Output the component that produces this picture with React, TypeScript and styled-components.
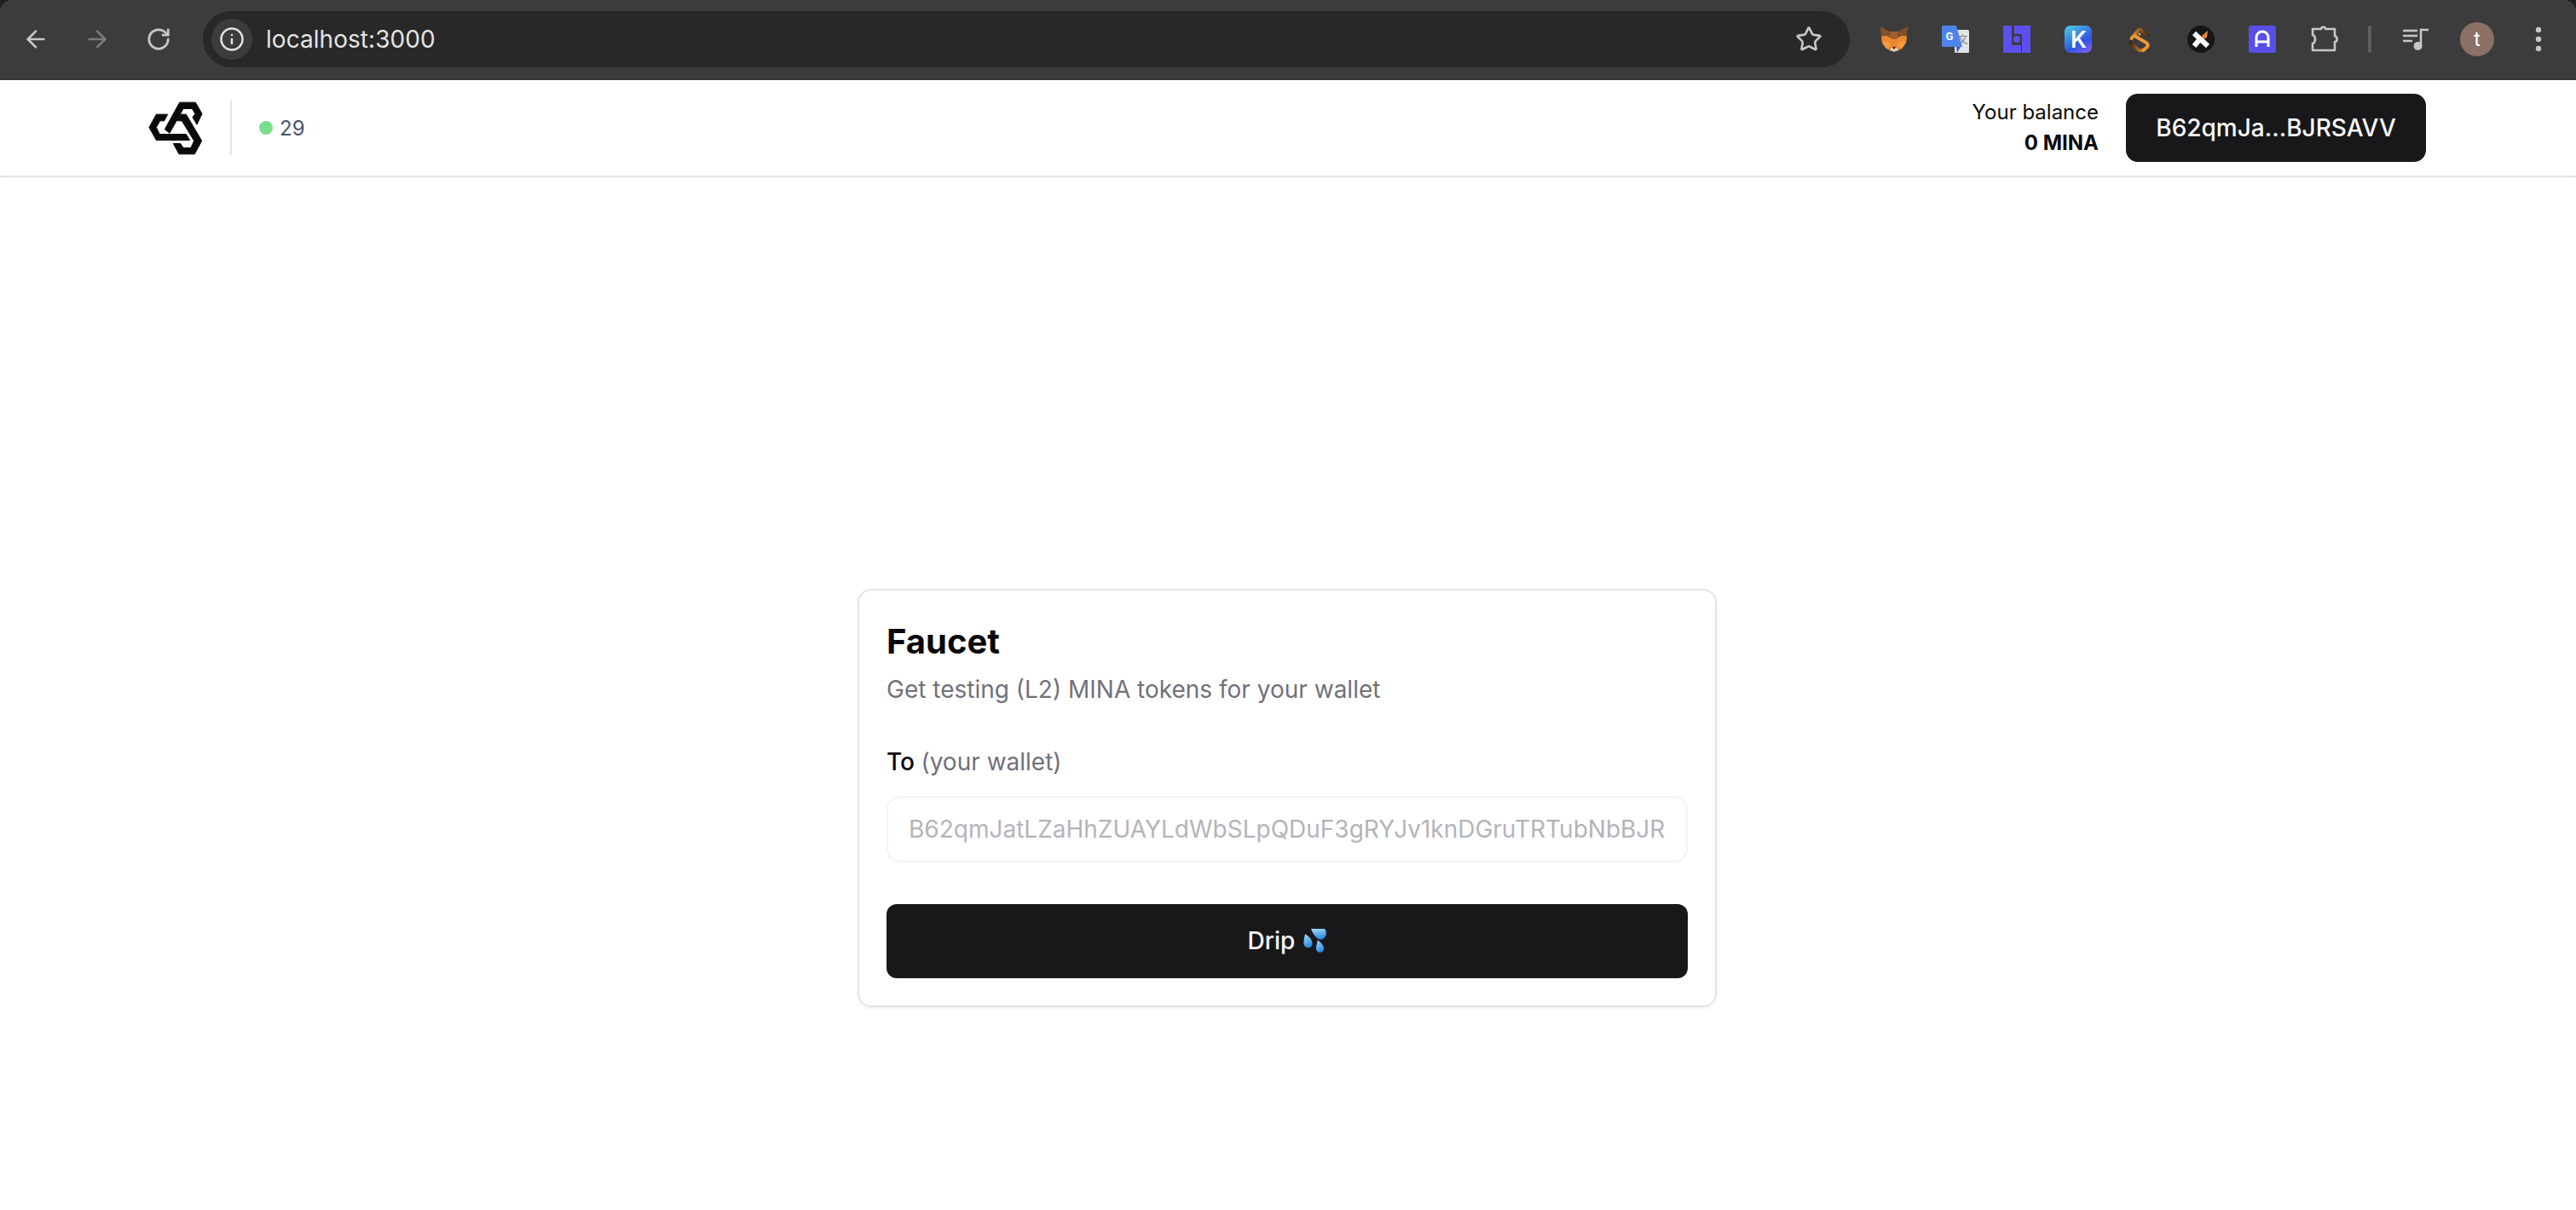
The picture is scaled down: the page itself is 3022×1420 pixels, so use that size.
import React from "react";
import styled, { createGlobalStyle } from "styled-components";
import { ArrowLeft, ArrowRight, RotateCw, Info, Star } from "lucide-react";

const Global = createGlobalStyle`
  * { box-sizing: border-box; }
  html, body { margin: 0; padding: 0; background: #fff; }
  body { font-family: Inter, "Noto Sans", sans-serif; }
`;

const Page = styled.div`
  width: 3022px;
  height: 1420px;
  overflow: hidden;
  display: flex;
  flex-direction: column;
  background: #fff;
`;

const ChromeFrame = styled.div`
  height: 94px;
  flex: none;
  background: #1f1f1f;
`;

const Toolbar = styled.div`
  height: 94px;
  display: flex;
  align-items: center;
  padding-left: 6px;
  background: #3c3c3c;
  border-radius: 14px 14px 0 0;
  border-bottom: 2px solid #363636;
  color: #c7c7c7;
`;

const ToolButton = styled.div<{ $dim?: boolean }>`
  width: 72px;
  height: 72px;
  flex: none;
  display: flex;
  align-items: center;
  justify-content: center;
  color: ${(p) => (p.$dim ? "#7c7c7c" : "#c7c7c7")};
`;

const Omnibox = styled.div`
  width: 1932px;
  height: 66px;
  flex: none;
  margin: 0 16px;
  padding: 0 32px 0 10px;
  display: flex;
  align-items: center;
  background: #282828;
  border-radius: 33px;
`;

const InfoChip = styled.div`
  width: 48px;
  height: 48px;
  flex: none;
  display: flex;
  align-items: center;
  justify-content: center;
  border-radius: 50%;
  background: #3c3c3c;
  color: #e3e3e3;
`;

const Url = styled.span`
  margin-left: 16px;
  flex: 1;
  font-size: 28px;
  font-family: Inter, sans-serif;
  color: #e3e3e3;
  letter-spacing: 0.05px;
`;

const ToolDivider = styled.div`
  width: 4px;
  height: 32px;
  margin: 0 16px;
  flex: none;
  border-radius: 2px;
  background: #5e5e5e;
`;

const Avatar = styled.div`
  width: 40px;
  height: 40px;
  border-radius: 50%;
  display: flex;
  align-items: center;
  justify-content: center;
  background: #8a7065;
  color: #fff;
  font-size: 24px;
  font-family: Roboto, sans-serif;
`;

const Header = styled.header`
  height: 114px;
  flex: none;
  border-bottom: 2px solid #e4e4e7;
  box-shadow: 0 2px 2px rgba(0, 0, 0, 0.02);
  background: #fff;
`;

const HeaderInner = styled.div`
  height: 112px;
  margin: 0 176px 0 175px;
  display: flex;
  align-items: center;
  justify-content: space-between;
`;

const HeaderLeft = styled.div`
  display: flex;
  align-items: center;
`;

const LogoMark = styled.svg`
  width: 62px;
  height: 61px;
  display: block;
  overflow: visible;
`;

const VRule = styled.div`
  width: 2px;
  height: 64px;
  margin: 0 32px 0 33px;
  background: #e4e4e7;
`;

const Status = styled.div`
  display: flex;
  align-items: center;
  gap: 8px;
  font-size: 24px;
  color: #475569;
`;

const StatusDot = styled.span`
  width: 16px;
  height: 16px;
  border-radius: 50%;
  background: #7adf8c;
`;

const HeaderRight = styled.div`
  display: flex;
  align-items: center;
  gap: 32px;
`;

const Balance = styled.div`
  display: flex;
  flex-direction: column;
  align-items: flex-end;
  font-size: 24px;
  line-height: 36px;
  color: #09090b;
`;

const BalanceValue = styled.span`
  font-weight: 700;
`;

const WalletButton = styled.button`
  width: 352px;
  height: 80px;
  border: 0;
  border-radius: 14px;
  background: #18181b;
  color: #fafafa;
  font-family: inherit;
  font-size: 28px;
  font-weight: 500;
`;

const Main = styled.main`
  flex: 1;
  display: flex;
  justify-content: center;
  padding: 483px 2px 0 0;
`;

const Card = styled.section`
  width: 1008px;
  height: 491px;
  padding: 32px;
  border: 2px solid #e4e4e7;
  border-radius: 16px;
  background: #fff;
  box-shadow: 0 2px 4px rgba(0, 0, 0, 0.05);
  display: flex;
  flex-direction: column;
`;

const Title = styled.h1`
  margin: 0;
  font-size: 40px;
  line-height: 56px;
  font-weight: 700;
  color: #09090b;
`;

const Subtitle = styled.p`
  margin: 8px 0 0;
  font-size: 28px;
  line-height: 40px;
  color: #71717a;
`;

const Label = styled.label`
  margin-top: 45px;
  font-size: 28px;
  line-height: 40px;
  font-weight: 500;
  color: #09090b;
`;

const LabelHint = styled.span`
  font-weight: 400;
  color: #71717a;
`;

const Field = styled.input`
  width: 100%;
  height: 78px;
  margin-top: 20px;
  padding: 0 24px;
  border: 2px solid #f4f4f5;
  border-radius: 16px;
  background: #fff;
  font-family: inherit;
  font-size: 28px;
  outline: none;
  &::placeholder {
    color: #b4b4ba;
    opacity: 1;
  }
`;

const DripButton = styled.button`
  width: 100%;
  height: 88px;
  margin-top: 49px;
  border: 0;
  border-radius: 12px;
  background: #18181b;
  color: #fafafa;
  font-family: inherit;
  font-size: 28px;
  font-weight: 500;
  display: flex;
  align-items: center;
  justify-content: center;
  gap: 10px;
`;

const ExtSvg = styled.svg`
  width: 32px;
  height: 32px;
  display: block;
  overflow: visible;
`;

const DropSvg = styled.svg`
  width: 27px;
  height: 30px;
  display: block;
`;

const Fox = () => (
  <ExtSvg viewBox="0 0 32 32">
    <polygon points="1,8 10,9 22,9 31,8 30,20 25,27 20,30 12,30 7,27 2,20" fill="#ec8630" />
    <polygon points="0,1 11,7 13,15 7,12 1,13" fill="#82502a" />
    <polygon points="32,1 21,7 19,15 25,12 31,13" fill="#82502a" />
    <polygon points="11,7 21,7 19,16 13,16" fill="#9c5f2b" />
    <polygon points="1,13 7,12 13,16 13,22 7,27 2,20" fill="#ee8a30" />
    <polygon points="31,13 25,12 19,16 19,22 25,27 30,20" fill="#ee8a30" />
    <polygon points="2,20 8,18 12,21 11,25 7,27" fill="#f59c3e" />
    <polygon points="30,20 24,18 20,21 21,25 25,27" fill="#f59c3e" />
    <polygon points="12,26 20,26 20,29 16,31 12,29" fill="#d9cbbd" />
    <polygon points="14,25 18,25 16,28" fill="#2a2018" />
  </ExtSvg>
);

const Translate = () => (
  <ExtSvg viewBox="0 0 32 32">
    <rect x="15" y="5" width="17" height="27" rx="1.5" fill="#e4e4e4" />
    <text x="24.5" y="21" textAnchor="middle" fontSize="12" fill="#6b7c86" fontFamily="'Noto Sans CJK SC', sans-serif">文</text>
    <polygon points="17,25 22,25 18,32" fill="#3a5fc8" />
    <path d="M1.5 0H17L24 25H1.5A1.5 1.5 0 0 1 0 23.5V1.5A1.5 1.5 0 0 1 1.5 0Z" fill="#4f83ea" />
    <text x="9" y="17" textAnchor="middle" fontSize="13" fontWeight="700" fill="#fff" fontFamily="Roboto, sans-serif">G</text>
  </ExtSvg>
);

const BlockLogo = () => (
  <ExtSvg viewBox="0 0 32 32">
    <polygon points="0,0 10,0 10,23 21,23 21,32 0,32" fill="#5b4ff0" />
    <polygon points="13,0 32,0 32,32 22,32 22,10 13,10" fill="#5b4ff0" />
    <circle cx="16" cy="16" r="4" fill="#5b4ff0" />
  </ExtSvg>
);

const KLogo = () => (
  <ExtSvg viewBox="0 0 32 32">
    <defs>
      <linearGradient id="kg" x1="0.2" y1="0" x2="0.8" y2="1">
        <stop offset="0" stopColor="#4cc0e6" />
        <stop offset="0.65" stopColor="#2f55e4" />
        <stop offset="1" stopColor="#7a5ff0" />
      </linearGradient>
    </defs>
    <rect width="32" height="32" rx="7" fill="url(#kg)" />
    <text x="16.5" y="26" textAnchor="middle" fontSize="27" fontWeight="600" fill="#fff" fontFamily="Inter, sans-serif">K</text>
  </ExtSvg>
);

const Chain = () => (
  <ExtSvg viewBox="0 0 32 32">
    <defs>
      <linearGradient id="sa" gradientUnits="userSpaceOnUse" x1="6" y1="12" x2="27" y2="8">
        <stop offset="0" stopColor="#f5a12c" />
        <stop offset="1" stopColor="#3e2412" />
      </linearGradient>
      <linearGradient id="sb" gradientUnits="userSpaceOnUse" x1="20" y1="30" x2="5" y2="19">
        <stop offset="0" stopColor="#d9802a" />
        <stop offset="1" stopColor="#3a2012" />
      </linearGradient>
    </defs>
    <path d="M6.5 15L15 5Q16.5 3.8 18 5L26 11.5" fill="none" stroke="url(#sa)" strokeWidth="3.8" strokeLinecap="round" />
    <path d="M5.5 20L15 28.5Q17 30 19 28.5" fill="none" stroke="url(#sb)" strokeWidth="3.8" strokeLinecap="round" />
    <path d="M11 12.5L24.5 20.5Q27 23 24.5 25.5L20.5 29" fill="none" stroke="#f29a2e" strokeWidth="3.8" strokeLinecap="round" />
    <circle cx="16" cy="10" r="1.5" fill="#f5a12c" />
  </ExtSvg>
);

const RocketX = () => (
  <ExtSvg viewBox="0 0 32 32">
    <circle cx="16" cy="16" r="16" fill="#161616" />
    <path d="M8 9L24 24" stroke="#fff" strokeWidth="6" />
    <path d="M8 24L14 17" stroke="#fff" strokeWidth="6" />
    <path d="M17 12L24 6L23 14L19 16Z" fill="#e9873a" />
  </ExtSvg>
);

const ArchLogo = () => (
  <ExtSvg viewBox="0 0 32 32">
    <rect width="32" height="32" rx="2.5" fill="#584fe6" />
    <path d="M9 25V14A7 7 0 0 1 23 14V25M9 19H23" fill="none" stroke="#fff" strokeWidth="3" />
  </ExtSvg>
);

const PuzzleIcon = () => (
  <ExtSvg viewBox="0 0 32 32">
    <path
      d="M3 4H13C13 1 18 1 18 4H29V12.5C32.5 12.5 32.5 19 29 19V29H3V21C7 20 7 12 3 11Z"
      fill="none"
      stroke="#c7c7c7"
      strokeWidth="2.6"
      strokeLinejoin="round"
    />
  </ExtSvg>
);

const QueueIcon = () => (
  <ExtSvg viewBox="0 0 32 32">
    <path d="M1 6H18M1 12H18M1 18H12" stroke="#c7c7c7" strokeWidth="2.6" fill="none" />
    <path d="M22 24V5H31" stroke="#c7c7c7" strokeWidth="2.6" fill="none" />
    <circle cx="18.5" cy="24" r="5" fill="#c7c7c7" />
  </ExtSvg>
);

const MoreIcon = () => (
  <ExtSvg viewBox="0 0 32 32">
    <circle cx="16" cy="5" r="3.2" fill="#c7c7c7" />
    <circle cx="16" cy="16" r="3.2" fill="#c7c7c7" />
    <circle cx="16" cy="27" r="3.2" fill="#c7c7c7" />
  </ExtSvg>
);

const Drops = () => (
  <DropSvg viewBox="0 0 27 30">
    <defs>
      <linearGradient id="dg" x1="0" y1="0" x2="0.3" y2="1">
        <stop offset="0" stopColor="#a8e0fb" />
        <stop offset="1" stopColor="#2b8ae0" />
      </linearGradient>
    </defs>
    <path d="M9 1L25 1C28 4 27 11 23 13C18 15 13 11 9 1Z" fill="url(#dg)" />
    <path d="M2 7C6 10 11 13 10.5 19C10 24 3 25 1 20C-0.5 16 1.5 11 2 7Z" fill="url(#dg)" />
    <path d="M17 14C20 17 25 21 24 25C23 30 16 30 15 25C14.5 21 16.5 18 17 14Z" fill="url(#dg)" />
  </DropSvg>
);

const Logo = () => (
  <LogoMark viewBox="75 60 186 182">
    <g fill="#0a0a0a" stroke="#0a0a0a" strokeWidth="3" strokeLinejoin="miter">
      <polygon points="182,60 238,60 261,100 243,138 228,112 237,100 226,82 195,82 147,168 130,155" />
      <polygon points="140,102 100,102 75,148 100,193 218,193 205,172 112,172 100,148 113,125 128,125" />
      <polygon points="185,102 205,102 260,195 235,242 180,242 160,205 185,205 195,220 222,220 233,195 190,125 173,125" />
    </g>
  </LogoMark>
);

const extensions = [Fox, Translate, BlockLogo, KLogo, Chain, RocketX, ArchLogo, PuzzleIcon];

export default function App() {
  return (
    <Page>
      <Global />
      <ChromeFrame>
        <Toolbar>
          <ToolButton><ArrowLeft size={32} strokeWidth={2} /></ToolButton>
          <ToolButton $dim><ArrowRight size={32} strokeWidth={2} /></ToolButton>
          <ToolButton><RotateCw size={30} strokeWidth={2.2} /></ToolButton>
          <Omnibox>
            <InfoChip><Info size={30} strokeWidth={2} /></InfoChip>
            <Url>localhost:3000</Url>
            <Star size={32} strokeWidth={2} color="#c7c7c7" />
          </Omnibox>
          {extensions.map((Ext, i) => (
            <ToolButton key={i}><Ext /></ToolButton>
          ))}
          <ToolDivider />
          <ToolButton><QueueIcon /></ToolButton>
          <ToolButton><Avatar>t</Avatar></ToolButton>
          <ToolButton><MoreIcon /></ToolButton>
        </Toolbar>
      </ChromeFrame>
      <Header>
        <HeaderInner>
          <HeaderLeft>
            <Logo />
            <VRule />
            <Status>
              <StatusDot />
              29
            </Status>
          </HeaderLeft>
          <HeaderRight>
            <Balance>
              <span>Your balance</span>
              <BalanceValue>0 MINA</BalanceValue>
            </Balance>
            <WalletButton>B62qmJa...BJRSAVV</WalletButton>
          </HeaderRight>
        </HeaderInner>
      </Header>
      <Main>
        <Card>
          <Title>Faucet</Title>
          <Subtitle>Get testing (L2) MINA tokens for your wallet</Subtitle>
          <Label>
            To <LabelHint>(your wallet)</LabelHint>
          </Label>
          <Field placeholder="B62qmJatLZaHhZUAYLdWbSLpQDuF3gRYJv1knDGruTRTubNbBJR" />
          <DripButton>
            Drip
            <Drops />
          </DripButton>
        </Card>
      </Main>
    </Page>
  );
}
